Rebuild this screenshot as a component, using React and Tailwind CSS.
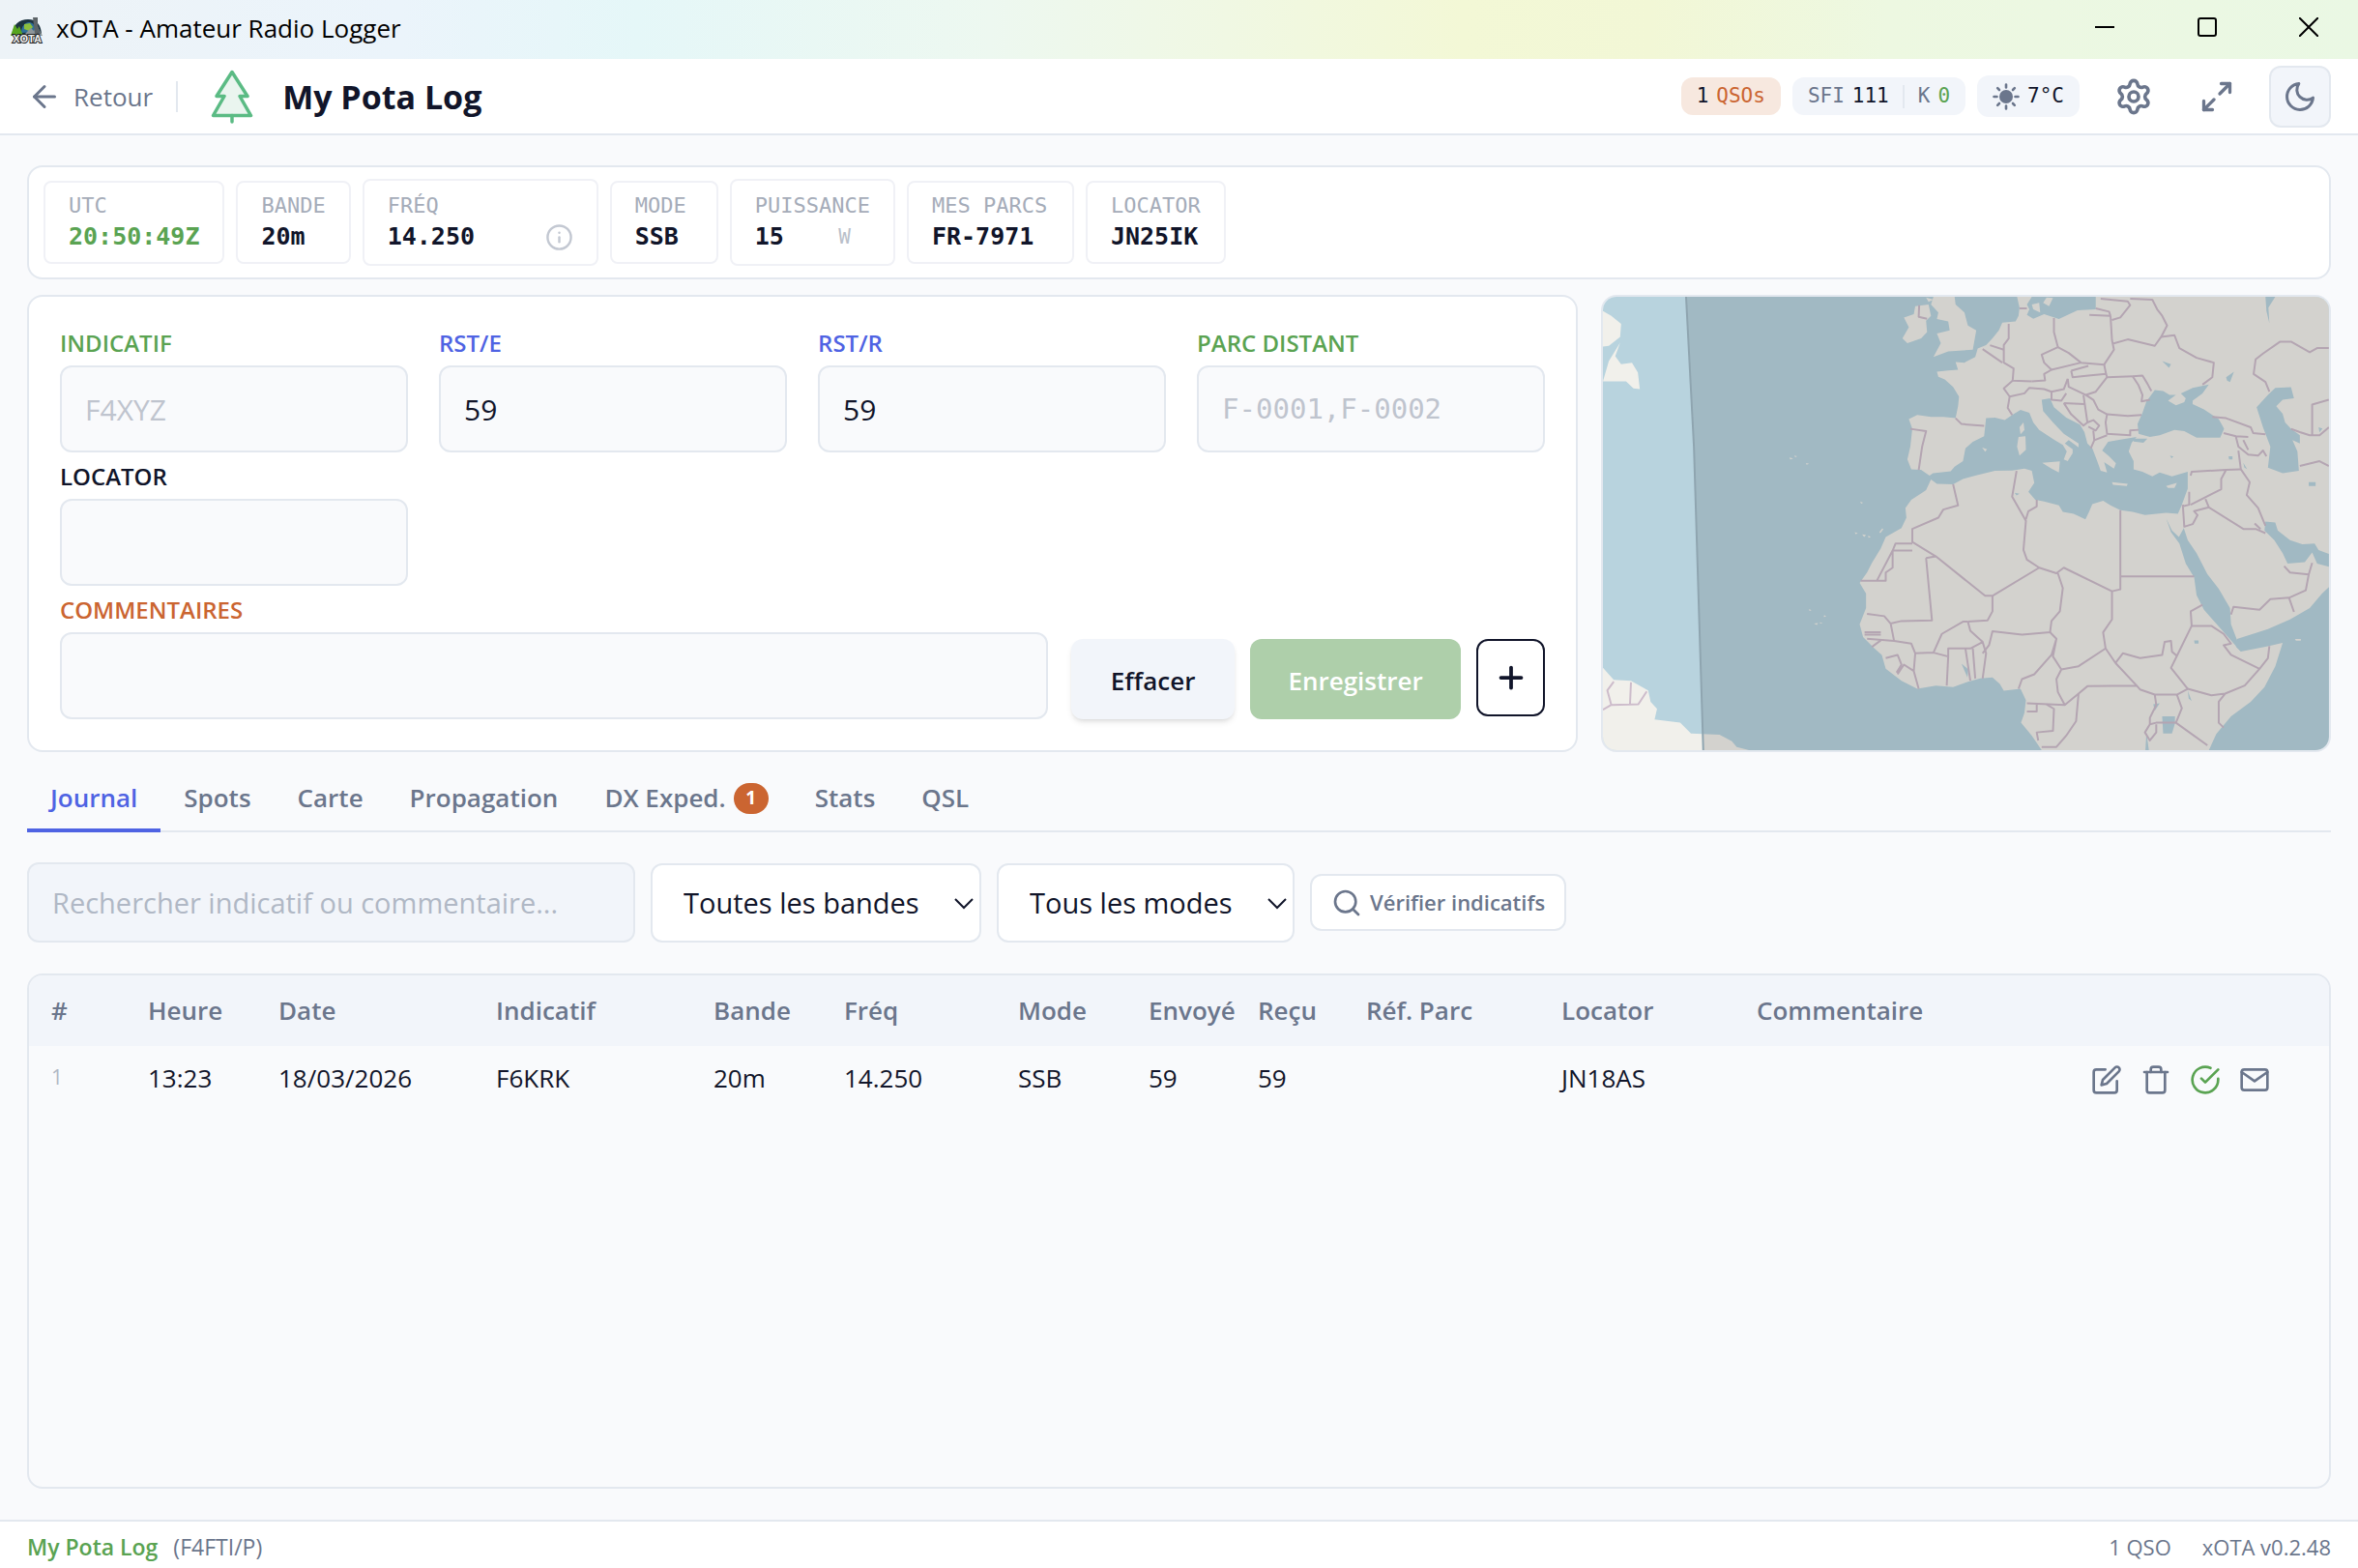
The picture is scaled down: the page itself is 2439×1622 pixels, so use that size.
import { useState } from "react";
import { Settings } from "lucide-react";
import {
    FiArrowLeft, FiCheckCircle, FiEdit, FiInfo, FiMail,
    FiMaximize2, FiMoon, FiPlus, FiSearch, FiTrash,
} from "react-icons/fi";

const TABS = [
    { id: "journal", label: "Journal" },
    { id: "spots", label: "Spots" },
    { id: "carte", label: "Carte" },
    { id: "propagation", label: "Propagation" },
    { id: "dx", label: "DX Exped.", badge: 1 },
    { id: "stats", label: "Stats" },
    { id: "qsl", label: "QSL" },
];

const COLUMNS = [
    { label: "#", width: "w-[100px]" },
    { label: "Heure", width: "w-[135px]" },
    { label: "Date", width: "w-[225px]" },
    { label: "Indicatif", width: "w-[225px]" },
    { label: "Bande", width: "w-[135px]" },
    { label: "Fréq", width: "w-[180px]" },
    { label: "Mode", width: "w-[135px]" },
    { label: "Envoyé", width: "w-[113px]" },
    { label: "Reçu", width: "w-[112px]" },
    { label: "Réf. Parc", width: "w-[202px]" },
    { label: "Locator", width: "w-[202px]" },
    { label: "Commentaire", width: "w-[340px]" },
];

const QSOS = [
    { id: 1, time: "13:23", date: "18/03/2026", call: "F6KRK", band: "20m", freq: "14.250", mode: "SSB", sent: "59", rcvd: "59", park: "", locator: "JN18AS", comment: "" },
];

function AppLogo() {
    return (
        <svg viewBox="0 0 36 28" className="h-7 w-9">
            <path d="M3 20C3 8 10 3 19 3s14 6 14 17z" fill="#1d3440" />
            <path d="M12 17c0-7 4-11 8-11s7 4 7 10z" fill="#2f6f9a" />
            <path d="M15 8l6-1 3 4-4 4-5-2z" fill="#8cbf3d" />
            <path d="M1 20l4-12 3 5 2-3 4 10z" fill="#57a51f" />
            <path d="M14 20l8-8 3 3 3-6 6 11z" fill="#8d9599" />
            <path d="M24 1h5v8l3 9h-6z" fill="#5d6468" />
            <text x="18" y="27" textAnchor="middle" fontSize="11" stroke="#222" strokeWidth="2" paintOrder="stroke" fill="#f1f1f1" className="font-['Liberation_Sans'] font-bold">XOTA</text>
        </svg>
    );
}

function TitleBar() {
    return (
        <div className="flex h-[61px] items-center bg-[linear-gradient(90deg,#edf3f7_0%,#ebf4fb_17%,#e5f7f8_27%,#edf8f0_42%,#f3f8d6_62%,#f2f7d6_70%,#edf8e1_80%,#eaf8e4_100%)] pl-[10px]">
            <AppLogo />
            <span className="ml-3 pb-0.5 text-[26px] text-black">xOTA - Amateur Radio Logger</span>
            <div className="ml-auto flex h-full items-start text-black">
                <button aria-label="Réduire" className="flex h-14 w-[106px] items-center justify-center">
                    <svg viewBox="0 0 20 20" className="size-5" fill="none" stroke="currentColor" strokeWidth="2"><path d="M0 10h20" /></svg>
                </button>
                <button aria-label="Agrandir" className="flex h-14 w-[106px] items-center justify-center">
                    <svg viewBox="0 0 20 20" className="size-5" fill="none" stroke="currentColor" strokeWidth="2"><rect x="1" y="1" width="18" height="18" rx="2" /></svg>
                </button>
                <button aria-label="Fermer" className="flex h-14 w-[103px] items-center justify-center">
                    <svg viewBox="0 0 20 20" className="size-5" fill="none" stroke="currentColor" strokeWidth="2"><path d="M0 0l20 20M20 0L0 20" /></svg>
                </button>
            </div>
        </div>
    );
}

function PineTree() {
    return (
        <svg viewBox="0 0 44 56" className="h-14 w-11" fill="none" stroke="#5bbb84" strokeWidth="3.500" strokeLinejoin="round" strokeLinecap="round">
            <path d="M22 2.500L38 27.500h-8L41.500 47.500h-39L14 27.500H6z" fill="#eaf5ef" />
            <path d="M22 47.500V54" />
        </svg>
    );
}

function SunIcon() {
    return (
        <svg viewBox="0 0 28 28" className="size-7" stroke="#6b768c" strokeWidth="2.600" strokeLinecap="round">
            <circle cx="14" cy="14" r="7" fill="#6b768c" stroke="none" />
            <path d="M14 1.500v3M14 23.500v3M1.500 14h3M23.500 14h3M5.200 5.200l1.800 1.800M21 21l1.800 1.800M5.200 22.800L7 21M21 7l1.800-1.800" />
        </svg>
    );
}

function Header() {
    return (
        <header className="flex h-[79px] items-center border-b-2 border-[#e3e8ef] bg-white px-7">
            <button className="flex items-center gap-3 text-[26px] text-[#6b768c]">
                <FiArrowLeft size={36} strokeWidth={2} />
                <span className="pt-0.5">Retour</span>
            </button>
            <div className="ml-6 h-8 w-[2px] bg-[#e3e8ef]" />
            <div className="ml-[34px]"><PineTree /></div>
            <h1 className="ml-[30px] pt-0.5 text-[34px] font-bold text-[#11152a]">My Pota Log</h1>
            <div className="ml-auto flex items-center gap-3 font-['DejaVu_Sans_Mono',monospace] text-[21px] text-[#11152a]">
                <span className="flex h-[39px] items-center gap-2 rounded-xl bg-[#f7e8df] px-4">
                    1 <span className="text-[#cb6531]">QSOs</span>
                </span>
                <span className="flex h-[39px] items-center gap-2 rounded-xl bg-[#f2f5fa] px-4">
                    <span className="text-[#6b768c]">SFI</span> 111
                    <span className="mx-1.5 h-6 w-[2px] bg-[#e3e8ef]" />
                    <span className="text-[#6b768c]">K</span>
                    <span className="text-[#5aa352]">0</span>
                </span>
                <span className="flex h-[43px] items-center gap-2 rounded-xl bg-[#f2f5fa] px-4">
                    <SunIcon /> 7°C
                </span>
            </div>
            <div className="ml-6 flex items-center gap-[22px] text-[#6b768c]">
                <button aria-label="Réglages" className="flex size-16 items-center justify-center"><Settings size={40} strokeWidth={2.2} /></button>
                <button aria-label="Plein écran" className="flex size-16 items-center justify-center"><FiMaximize2 size={36} strokeWidth={2.2} /></button>
                <button aria-label="Thème" className="flex size-16 items-center justify-center rounded-xl border-2 border-[#e3e8ef] bg-[#f2f5fa]"><FiMoon size={36} /></button>
            </div>
        </header>
    );
}

function InfoChip({ label, children, green = false, tall = false, width = "" }) {
    return (
        <div className={`${tall ? "h-[90px]" : "h-[86px]"} ${width} flex flex-col justify-center rounded-lg border-2 border-[#f0f1f6] px-6 pb-0.5`}>
            <div className="text-[22px] leading-8 text-[#a5acb9]">{label}</div>
            <div className={`flex items-center justify-between text-[25px] leading-8 font-bold ${green ? "text-[#5aa352]" : "text-[#11152a]"}`}>
                {children}
            </div>
        </div>
    );
}

function StatusStrip() {
    return (
        <section className="flex h-[118px] items-center gap-3 rounded-2xl border-2 border-[#e3e8ef] bg-white px-[15px] font-['DejaVu_Sans_Mono',monospace]">
            <InfoChip label="UTC" green>20:50:49Z</InfoChip>
            <InfoChip label="BANDE">20m</InfoChip>
            <InfoChip label="FRÉQ" tall width="w-[244px]">
                14.250
                <FiInfo size={29} strokeWidth={2} className="text-[#c3c8d2]" />
            </InfoChip>
            <InfoChip label="MODE" width="w-[112px]">SSB</InfoChip>
            <InfoChip label="PUISSANCE" tall>
                15
                <span className="mr-5 text-[21px] font-normal text-[#b9bfca]">W</span>
            </InfoChip>
            <InfoChip label="MES PARCS" width="w-[173px]">FR-7971</InfoChip>
            <InfoChip label="LOCATOR">JN25IK</InfoChip>
        </section>
    );
}

function Field({ id, label, color, mono = false, className = "", ...props }) {
    return (
        <div className={`flex min-w-0 flex-col ${className}`}>
            <label htmlFor={id} className={`mb-1.5 text-[24px] leading-[35px] font-semibold ${color}`}>{label}</label>
            <input
                id={id}
                className={`h-[90px] w-full rounded-xl border-2 border-[#e3e8ef] bg-[#f9fafc] px-6 text-[#11152a] placeholder:text-[#bfc4ce] ${mono ? "font-['DejaVu_Sans_Mono',monospace] text-[29px]" : "text-[30px]"}`}
                {...props}
            />
        </div>
    );
}

function QsoForm() {
    return (
        <form onSubmit={(e) => e.preventDefault()} className="flex flex-col gap-[7px] rounded-2xl border-2 border-[#e3e8ef] bg-white px-8 pt-[30px] pb-8">
            <div className="grid grid-cols-4 gap-x-8 gap-y-[7px]">
                <Field id="call" label="INDICATIF" color="text-[#5aa352]" placeholder="F4XYZ" />
                <Field id="rst-e" label="RST/E" color="text-[#4f63e3]" defaultValue="59" />
                <Field id="rst-r" label="RST/R" color="text-[#4f63e3]" defaultValue="59" />
                <Field id="park" label="PARC DISTANT" color="text-[#5aa352]" placeholder="F-0001,F-0002" mono />
                <Field id="locator" label="LOCATOR" color="text-[#11152a]" />
            </div>
            <div className="flex items-end">
                <Field id="comment" label="COMMENTAIRES" color="text-[#cb6531]" className="flex-1" />
                <div className="ml-6 flex items-start gap-4 text-[26px] font-semibold">
                    <button type="reset" className="h-[83px] w-[169px] rounded-xl bg-[#f2f5fa] pt-1 text-[#11152a] shadow-md">Effacer</button>
                    <button type="submit" disabled className="h-[83px] w-[218px] rounded-xl bg-[#aecfaa] pt-1 text-white">Enregistrer</button>
                    <button type="button" aria-label="Ajouter" className="flex h-20 w-[71px] items-center justify-center rounded-xl border-2 border-[#11152a] bg-white text-[#11152a]">
                        <FiPlus size={36} strokeWidth={2.5} />
                    </button>
                </div>
            </div>
        </form>
    );
}

// Coastlines of the day/night overview map
const MAINLAND = "M875 36L880 70 878 95 872 112 845 116 838 140 825 165 812 186 795 196 790 222 768 240 750 238 755 262 735 264 712 268 715 284 728 292 745 315 757 345 755 375 750 412 725 408 700 408 672 402 655 415 662 445 658 500 652 540 660 570 680 572 697 590 704 582 740 576 748 562 765 545 770 505 785 485 808 468 812 412 830 410 850 418 865 402 882 386 900 395 908 425 920 448 950 478 968 495 976 515 970 540 978 545 988 520 988 508 972 490 980 480 1000 502 1000 490 970 460 948 425 928 390 925 355 942 350 950 378 975 410 1003 432 1012 455 1018 490 1028 505 1038 545 1045 575 1058 580 1052 548 1072 568 1076 552 1062 530 1048 512 1060 485 1085 478 1118 470 1108 488 1102 515 1112 545 1112 570 1130 578 1150 592 1165 580 1190 592 1222 578 1222 630 1210 680 1202 708 1178 705 1135 712 1110 702 1085 697 1065 682 1050 668 1028 678 1022 700 1014 725 990 708 968 702 960 682 930 670 912 665 898 640 910 612 905 575 890 568 865 574 830 575 790 590 765 600 745 617 712 615 700 602 690 635 660 665 648 690 650 720 640 752 608 780 598 815 580 860 570 890 555 922 568 955 568 1000 555 1050 562 1090 585 1125 600 1145 608 1188 640 1225 672 1250 710 1240 745 1245 775 1228 800 1218 825 1215 840 1235 848 1256 882 1250 893 1285 890 1325 883 1355 905 1395 925 1440H1265L1280 1390 1310 1335 1350 1290 1378 1245 1400 1180 1415 1108 1385 1118 1330 1135 1320 1120 1322 1096 1385 1065 1430 1035 1470 1000 1495 955 1509 935V872L1485 862 1475 828 1460 858 1425 862 1415 830 1398 790 1378 760 1380 732 1400 735 1405 760 1430 790 1455 802 1480 800 1488 820 1509 832V36H1035V75L998 78 960 105 930 90 908 104 895 92 900 75 895 60 905 36Z";
const BLACK_SEA = "M1122 460L1120 430 1130 395 1138 360 1155 325 1172 328 1185 340 1198 340 1182 358 1198 372 1215 362 1218 350 1208 335 1232 318 1265 308 1252 335 1232 358 1232 368 1255 385 1285 415 1296 445 1288 472 1240 472 1215 452 1195 448 1165 465 1145 470Z";
const CASPIAN = "M1400 318L1432 316 1438 350 1415 355 1402 375 1415 398 1420 425 1432 445 1450 465 1450 490 1435 480 1445 515 1448 575 1415 582 1385 565 1390 500 1375 440 1362 378 1385 340Z";
const RED_SEA = "M1178 722L1190 760 1204 780 1214 752 1222 790 1240 830 1262 895 1285 940 1308 1000 1310 1050 1322 1098 1330 1135 1310 1100 1278 1045 1255 1005 1240 960 1235 905 1218 862 1205 800 1188 765Z";
const ISLANDS = [
    // Great Britain, Ireland
    "M705 36L700 60 715 85 712 105 735 112 738 140 712 150 720 180 705 222 735 205 785 200 792 140 775 125 768 85 750 60 748 36Z",
    "M668 65L695 60 700 95 690 110 692 145 680 165 652 180 642 165 655 130 645 100 665 90Z",
    "M690 38L705 45 695 52Z",
    // Corsica, Sardinia, Sicily, Crete, Cyprus, Balearics
    "M888 425L890 448 882 462 880 440Z", "M878 470L892 468 893 510 880 528 875 500Z",
    "M926 550L962 546 960 580 945 568Z", "M1068 610L1100 615 1098 622 1070 618Z",
    "M1178 622L1200 612 1195 628 1182 628Z", "M804 503L814 508 810 516Z",
    // Newfoundland, Labrador, South America
    "M33 80L50 95 70 120 68 160 45 188 33 190Z",
    "M68 178L58 220 70 245 92 240 104 270 108 322 95 320 80 298 33 298 45 235Z",
    "M33 1185L55 1222 90 1225 125 1255 130 1290 143 1312 138 1345 190 1355 212 1388 270 1392 295 1412 305 1430 330 1440H33Z",
    // Denmark's islands, Socotra
    "M905 60L920 55 922 85 908 75Z", "M935 38L948 40 940 65 928 55Z", "M1440 1096H1452V1101H1442Z",
    // Canaries, Madeira, Azores, Cape Verde
    "M545 765l6 3-4 4zM560 772l8 2-4 6zM572 776l6 3-5 3zM595 765l6-12 2 3-6 12z",
    "M556 671l6 3-4 3zM412 534l8 3-6 3zM422 528l6 2-4 3zM446 551l6 2-5 3z",
    "M452 1003l5 4-4 2zM483 1022l4 4-5 2zM462 1048l8-2-2 6zM474 1044l6 2-5 2z",
];
const LAKES = [
    "M1170 1335H1196V1358L1190 1388H1172Z", "M1152 1298L1165 1295 1155 1318Z",
    "M1138 1385L1143 1440H1136Z", "M1235 1100H1244V1110H1236Z", "M1222 1255L1230 1288 1224 1280Z",
    "M762 1172L776 1190 774 1215Z", "M1170 235L1188 245 1184 256Z",
    "M1300 285L1316 268 1308 300 1302 296Z", "M1380 36H1400L1386 70 1388 118 1382 80Z",
    "M1468 610H1482V622H1468Z", "M1110 475H1140L1132 488 1112 484Z",
    "M1305 530h8v10h-7zM1335 550l8 20-6-6zM1488 440l8 4-6 12zM1186 528l7 3-4 5zM870 643l10 3-6 5z",
];
const BORDERS = [
    // Europe
    "M880 72H895M676 62L675 98 692 104M858 120L858 165 848 185 848 240 868 258 866 296 905 298",
    "M950 102L950 145 958 192 925 215 930 240 945 262 930 275 932 295 905 298",
    "M958 192L980 210 1005 240 1052 246 1056 275M945 262L1005 240M985 265L1020 250",
    "M805 198L845 240M820 186L848 200M750 412L762 430 808 436",
    "M866 296L848 320 860 345 856 380 865 402M860 345L890 335 900 318 930 322 945 330 970 322 978 290",
    "M985 265L988 285 1020 280 1056 275 1058 285 1110 282M978 290L980 315 1015 340 1035 330 1058 285",
    "M945 330V355L965 358 975 335M970 365L1012 368M970 365L985 400 1010 435 1018 425 1010 340",
    "M1015 340L1030 355 1040 385 1058 400 1055 425 1058 460 1105 465 1105 450 1122 448",
    "M1058 400L1100 405 1128 402M1018 425L1030 418 1042 435 1035 450 1020 438M1030 450L1032 480 1025 505M1032 480L1058 465",
    "M658 445L690 452 682 500 675 572M1110 282L1122 310 1130 340 1128 360 1145 355M1110 282L1130 280 1140 305 1148 328",
    "M1022 92L1065 95 1068 170 1072 200 1052 246M1035 72L1062 82 1065 95M1045 42L1100 50 1105 62 1085 100 1068 108M1105 42L1150 45 1160 75 1170 95 1180 125 1168 160 1155 188 1100 168 1068 182",
    "M1168 160L1195 155 1205 195 1240 225 1275 240 1272 285 1252 308",
    "M1388 330L1380 300 1356 275 1360 230 1375 212 1410 175 1432 175 1470 208 1485 195 1509 195",
    // Caucasus and Middle East
    "M1272 408L1300 412 1350 440 1355 458 1380 462M1295 458L1320 468 1345 470M1320 470L1325 500 1345 525 1365 528 1375 512 1382 530M1335 480L1345 510M1325 512L1330 570 1348 610 1342 650 1365 690 1380 745",
    "M1228 590L1230 578 1300 572 1330 570M1300 572L1290 600 1290 632 1228 680M1225 640V680L1212 685M1212 680L1215 748 1232 740 1242 712 1235 700 1265 688 1258 662M1265 688L1335 755H1360L1380 768M1358 738L1370 755",
    "M1418 870L1430 890 1468 896 1475 860M1468 896L1462 945 1428 968 1438 1012M1428 968L1390 972 1368 1005 1315 996 1310 1020",
    "M1450 560L1490 545 1509 560M1432 445L1450 455 1470 465H1490L1509 440M1475 465V370L1509 355",
    // North and West Africa
    "M745 617L755 682 725 695 715 720 662 755V795L710 840 810 962 825 962 920 875 895 850 888 820 893 730 865 655 874 575",
    "M662 800H628L622 822 590 915H557M662 822H622V875L608 890V915H590M893 725L898 700 915 685V665",
    "M690 845L710 840M690 845L702 1038 640 1040 618 1048 605 1025 570 1018M618 1048L625 1102 570 1095M565 1075H598M565 1082H598M825 962V1010L815 1038 775 1042",
    "M775 1042L765 1042 722 1080 705 1138 668 1140 660 1110 625 1102M775 1042L780 1070 805 1105 780 1125 735 1125V1150L705 1138M735 1150L732 1240M770 1125L780 1225M785 1125L790 1218M805 1105L812 1140 805 1218M668 1140L665 1195 675 1250M608 1155L632 1145 640 1175 630 1200M632 1205L645 1175 665 1195M580 1120L598 1100",
    "M920 875L955 892 970 875 1068 948 1085 942V697M1085 902H1235M958 892L968 938 962 1010 945 1040 942 1075 885 1082 825 1072 818 1115 805 1140",
    "M942 1075L955 1095 945 1145 910 1205 885 1220 878 1250M955 1095L948 1150 965 1190 955 1220 958 1260 972 1300 895 1295M965 1190L1000 1180 1055 1125 1050 1075 1068 1035V948",
    "M1055 1125L1075 1170 1090 1140 1125 1155 1170 1145 1175 1105 1188 1102 1190 1135 1200 1148 1230 1055 1228 1010 1252 990M1075 1170L1118 1240 1018 1242 1000 1265 972 1300M1118 1240L1125 1252 1155 1268H1200L1222 1250 1188 1185 1200 1148",
    "M1230 1055L1270 1055 1295 1080 1310 1110 1295 1115 1310 1145 1368 1188 1385 1155 1388 1118M1368 1188L1338 1240 1298 1265 1270 1270 1222 1250M1298 1265L1285 1290V1355L1295 1370",
    "M1000 1265L995 1350 975 1395 955 1430 925 1430M915 1298V1320H895M935 1298L950 1312 948 1380 915 1385 918 1410M1155 1268L1158 1300 1145 1340V1360L1158 1355H1198L1262 1425M1200 1268L1210 1310 1198 1355M1145 1360L1135 1385 1145 1410 1158 1385V1360",
    // Guianas
    "M55 1228L42 1255 50 1300 33 1315M50 1300L105 1298 122 1258M90 1230L88 1298",
];

function DayNightMap() {
    return (
        <div className="overflow-hidden rounded-2xl border-2 border-[#e3e8ef]">
            <svg viewBox="33 36 1476 1404" preserveAspectRatio="none" className="block h-0 min-h-full w-full bg-[#b8d3de]">
                <g fill="#f1f0eb">
                    <path d={MAINLAND} />
                    {ISLANDS.map((d) => <path key={d} d={d} />)}
                </g>
                <g fill="#b8d3de">
                    <path d={BLACK_SEA} />
                    <path d={CASPIAN} />
                    <path d={RED_SEA} />
                    {LAKES.map((d) => <path key={d} d={d} />)}
                </g>
                <g fill="none" stroke="#cdbccb" strokeWidth="2" strokeLinejoin="round">
                    {BORDERS.map((d) => <path key={d} d={d} vectorEffect="non-scaling-stroke" />)}
                </g>
                <path d="M202 36L218 500 228 1000 237 1440H1509V36Z" fill="#000" fillOpacity="0.12" />
                <path d="M202 36L218 500 228 1000 237 1440" fill="none" stroke="#8fa5b0" strokeWidth="2" vectorEffect="non-scaling-stroke" />
            </svg>
        </div>
    );
}

function Tabs({ active, onChange }) {
    return (
        <nav className="mt-4 flex h-[67px] items-stretch border-b-2 border-[#e3e8ef]">
            {TABS.map((t) => (
                <button
                    key={t.id}
                    onClick={() => onChange(t.id)}
                    className={`-mb-0.5 flex items-center gap-2 border-b-4 px-6 text-[26px] font-semibold ${active === t.id ? "border-[#4f63e3] text-[#4f63e3]" : "border-transparent text-[#6b768c]"}`}
                >
                    {t.label}
                    {t.badge && (
                        <span className="flex h-8 w-9 items-center justify-center rounded-full bg-[#cb6531] text-[19px] font-bold text-white">{t.badge}</span>
                    )}
                </button>
            ))}
        </nav>
    );
}

function Select({ label, width, children }) {
    return (
        <div className={`relative ${width}`}>
            <select aria-label={label} className="h-[82px] w-full appearance-none rounded-xl border-2 border-[#e3e8ef] bg-white pl-8 text-[29px] text-[#11152a]">
                {children}
            </select>
            <svg viewBox="0 0 20 12" className="pointer-events-none absolute top-9 right-2 h-3 w-5" fill="none" stroke="#11152a" strokeWidth="2"><path d="M1 1l9 9 9-9" /></svg>
        </div>
    );
}

function Filters() {
    return (
        <div className="mt-[31px] flex items-center gap-4">
            <input aria-label="Rechercher" placeholder="Rechercher indicatif ou commentaire..." className="h-[83px] w-[629px] rounded-xl border-2 border-[#e3e8ef] bg-[#f2f5fa] px-6 text-[29px] text-[#11152a] placeholder:text-[#b0b8c5]" />
            <Select label="Bande" width="w-[342px]"><option>Toutes les bandes</option></Select>
            <Select label="Mode" width="w-[308px]"><option>Tous les modes</option></Select>
            <button className="flex h-[59px] items-center gap-2 rounded-xl border-2 border-[#e3e8ef] bg-white px-5 text-[22px] font-semibold text-[#6b768c]">
                <FiSearch size={32} strokeWidth={2} /> Vérifier indicatifs
            </button>
        </div>
    );
}

function LogTable() {
    return (
        <div className="mt-8 flex-1 overflow-hidden rounded-2xl border-2 border-[#e3e8ef]">
            <table className="w-full table-fixed text-left text-[26px]">
                <thead className="bg-[#f2f5fa] text-[#6b768c]">
                    <tr className="h-[73px]">
                        {COLUMNS.map((c) => <th key={c.label} scope="col" className={`${c.width} pl-[23px] font-semibold whitespace-nowrap`}>{c.label}</th>)}
                        <th aria-label="Actions" />
                    </tr>
                </thead>
                <tbody className="text-[#11152a]">
                    {QSOS.map((q) => (
                        <tr key={q.id} className="h-[66px]">
                            <td className="pl-[23px] text-[21px] text-[#b0b8c5]">{q.id}</td>
                            <td className="pl-[23px]">{q.time}</td>
                            <td className="pl-[23px]">{q.date}</td>
                            <td className="pl-[23px]">{q.call}</td>
                            <td className="pl-[23px]">{q.band}</td>
                            <td className="pl-[23px]">{q.freq}</td>
                            <td className="pl-[23px]">{q.mode}</td>
                            <td className="pl-[23px]">{q.sent}</td>
                            <td className="pl-[23px]">{q.rcvd}</td>
                            <td className="pl-[23px]">{q.park}</td>
                            <td className="pl-[23px]">{q.locator}</td>
                            <td className="pl-[23px]">{q.comment}</td>
                            <td>
                                <div className="flex justify-end gap-[19px] pt-1 pr-[61px] text-[#6b768c]">
                                    <button aria-label="Modifier"><FiEdit size={32} /></button>
                                    <button aria-label="Supprimer"><FiTrash size={32} /></button>
                                    <button aria-label="Confirmé" className="text-[#5aa352]"><FiCheckCircle size={32} /></button>
                                    <button aria-label="Envoyer"><FiMail size={32} /></button>
                                </div>
                            </td>
                        </tr>
                    ))}
                </tbody>
            </table>
        </div>
    );
}

export default function App() {
    const [tab, setTab] = useState("journal");

    return (
        <div className="flex min-h-screen flex-col bg-[#f9fafc] font-['Open_Sans',sans-serif]">
            <TitleBar />
            <Header />
            <main className="flex flex-1 flex-col px-7 pt-[31px] pb-8">
                <StatusStrip />
                <div className="mt-4 grid grid-cols-[minmax(0,17fr)_minmax(0,8fr)] gap-6">
                    <QsoForm />
                    <DayNightMap />
                </div>
                <Tabs active={tab} onChange={setTab} />
                <Filters />
                <LogTable />
            </main>
            <footer className="flex h-[50px] items-center gap-4 border-t-2 border-[#e3e8ef] bg-white px-7 pt-1 text-[22px] text-[#6b768c]">
                <span className="text-[23px] font-semibold text-[#5aa352]">My Pota Log</span>
                <span className="text-[23px]">(F4FTI/P)</span>
                <span className="ml-auto">1 QSO</span>
                <span className="ml-4">xOTA v0.2.48</span>
            </footer>
        </div>
    );
}
